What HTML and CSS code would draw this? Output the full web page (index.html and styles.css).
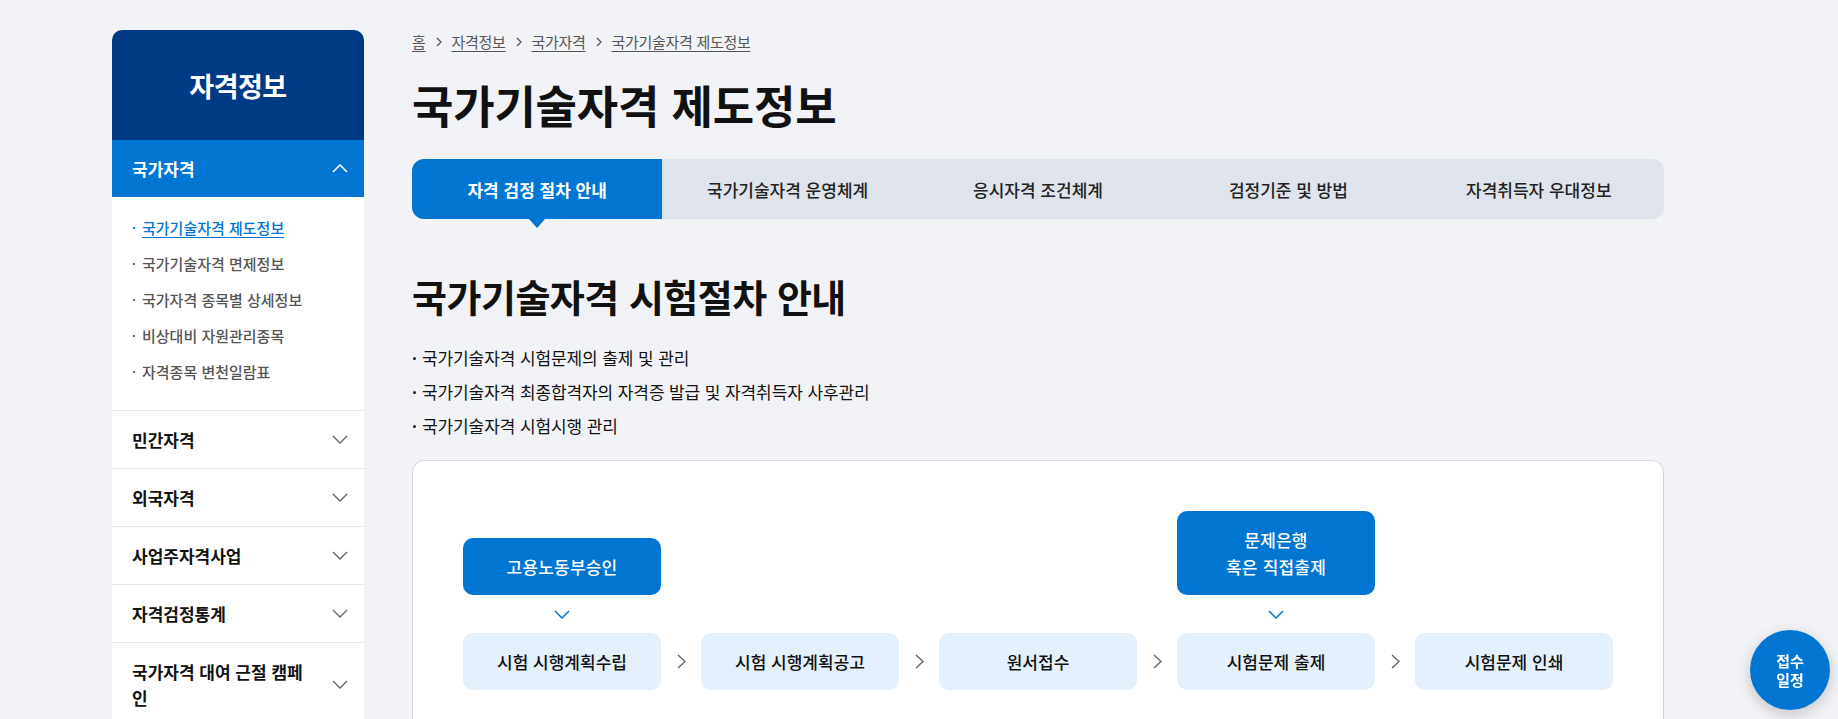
FILE: index.html
```html
<!DOCTYPE html>
<html lang="ko">
<head>
    <meta charset="UTF-8">
    <title>국가기술자격 제도정보</title>
    <link rel="stylesheet" href="styles.css">
</head>
<body>
    <div class="wrap">
        <aside class="lnb">
            <h2 class="lnb-title">자격정보</h2>
            <div class="lnb-group open">
                <a href="#" class="lnb-head">
                    <span>국가자격</span>
                    <svg width="16" height="9" viewBox="0 0 16 9"><path d="M1 8L8 1L15 8" fill="none" stroke="#fff" stroke-width="1.6"/></svg>
                </a>
                <ul class="lnb-sub">
                    <li class="on"><a href="#">국가기술자격 제도정보</a></li>
                    <li><a href="#">국가기술자격 면제정보</a></li>
                    <li><a href="#">국가자격 종목별 상세정보</a></li>
                    <li><a href="#">비상대비 자원관리종목</a></li>
                    <li><a href="#">자격종목 변천일람표</a></li>
                </ul>
            </div>
            <div class="lnb-group">
                <a href="#" class="lnb-head">
                    <span>민간자격</span>
                    <svg width="16" height="9" viewBox="0 0 16 9"><path d="M1 1L8 8L15 1" fill="none" stroke="#666" stroke-width="1.4"/></svg>
                </a>
            </div>
            <div class="lnb-group">
                <a href="#" class="lnb-head">
                    <span>외국자격</span>
                    <svg width="16" height="9" viewBox="0 0 16 9"><path d="M1 1L8 8L15 1" fill="none" stroke="#666" stroke-width="1.4"/></svg>
                </a>
            </div>
            <div class="lnb-group">
                <a href="#" class="lnb-head">
                    <span>사업주자격사업</span>
                    <svg width="16" height="9" viewBox="0 0 16 9"><path d="M1 1L8 8L15 1" fill="none" stroke="#666" stroke-width="1.4"/></svg>
                </a>
            </div>
            <div class="lnb-group">
                <a href="#" class="lnb-head">
                    <span>자격검정통계</span>
                    <svg width="16" height="9" viewBox="0 0 16 9"><path d="M1 1L8 8L15 1" fill="none" stroke="#666" stroke-width="1.4"/></svg>
                </a>
            </div>
            <div class="lnb-group">
                <a href="#" class="lnb-head">
                    <span>국가자격 대여 근절 캠페인</span>
                    <svg width="16" height="9" viewBox="0 0 16 9"><path d="M1 1L8 8L15 1" fill="none" stroke="#666" stroke-width="1.4"/></svg>
                </a>
            </div>
        </aside>

        <main class="content">
            <div class="breadcrumb">
                <a href="#">홈</a>
                <svg width="6" height="10" viewBox="0 0 6 10"><path d="M1 1L5 5L1 9" fill="none" stroke="#555" stroke-width="1.2"/></svg>
                <a href="#">자격정보</a>
                <svg width="6" height="10" viewBox="0 0 6 10"><path d="M1 1L5 5L1 9" fill="none" stroke="#555" stroke-width="1.2"/></svg>
                <a href="#">국가자격</a>
                <svg width="6" height="10" viewBox="0 0 6 10"><path d="M1 1L5 5L1 9" fill="none" stroke="#555" stroke-width="1.2"/></svg>
                <a href="#">국가기술자격 제도정보</a>
            </div>

            <h1 class="page-title">국가기술자격 제도정보</h1>

            <ul class="tabs">
                <li class="on"><a href="#">자격 검정 절차 안내</a></li>
                <li><a href="#">국가기술자격 운영체계</a></li>
                <li><a href="#">응시자격 조건체계</a></li>
                <li><a href="#">검정기준 및 방법</a></li>
                <li><a href="#">자격취득자 우대정보</a></li>
            </ul>

            <h2 class="sec-title">국가기술자격 시험절차 안내</h2>
            <ul class="dot-list">
                <li>국가기술자격 시험문제의 출제 및 관리</li>
                <li>국가기술자격 최종합격자의 자격증 발급 및 자격취득자 사후관리</li>
                <li>국가기술자격 시험시행 관리</li>
            </ul>

            <div class="flow-box">
                <div class="flow-row top">
                    <div class="flow-top col-1">고용노동부승인</div>
                    <div class="flow-top col-7">문제은행<br>혹은 직접출제</div>
                </div>
                <div class="flow-row down">
                    <svg class="col-1" width="16" height="9" viewBox="0 0 16 9"><path d="M1 1L8 8L15 1" fill="none" stroke="#0075d2" stroke-width="1.5"/></svg>
                    <svg class="col-7" width="16" height="9" viewBox="0 0 16 9"><path d="M1 1L8 8L15 1" fill="none" stroke="#0075d2" stroke-width="1.5"/></svg>
                </div>
                <div class="flow-row steps">
                    <div class="step">시험 시행계획수립</div>
                    <div class="arrow"><svg width="9" height="15" viewBox="0 0 9 15"><path d="M1 1L8 7.5L1 14" fill="none" stroke="#666" stroke-width="1.4"/></svg></div>
                    <div class="step">시험 시행계획공고</div>
                    <div class="arrow"><svg width="9" height="15" viewBox="0 0 9 15"><path d="M1 1L8 7.5L1 14" fill="none" stroke="#666" stroke-width="1.4"/></svg></div>
                    <div class="step">원서접수</div>
                    <div class="arrow"><svg width="9" height="15" viewBox="0 0 9 15"><path d="M1 1L8 7.5L1 14" fill="none" stroke="#666" stroke-width="1.4"/></svg></div>
                    <div class="step">시험문제 출제</div>
                    <div class="arrow"><svg width="9" height="15" viewBox="0 0 9 15"><path d="M1 1L8 7.5L1 14" fill="none" stroke="#666" stroke-width="1.4"/></svg></div>
                    <div class="step">시험문제 인쇄</div>
                </div>
            </div>
        </main>
    </div>

    <a href="#" class="quick-btn">접수<br>일정</a>
</body>
</html>
```

FILE: styles.css
```css
body {
    margin: 0;
    background-color: #f1f3f7;
    color: #111;
    font-family: "Noto Sans CJK KR", "Noto Sans", sans-serif;
}
a {
    color: inherit;
    text-decoration: none;
}
ul {
    list-style: none;
    margin: 0;
    padding: 0;
}
.wrap {
    display: flex;
    align-items: flex-start;
    gap: 48px;
    padding: 30px 0 0 112px;
}

/* left menu */
.lnb {
    width: 252px;
    flex: none;
    background-color: #fff;
    border-radius: 10px 10px 0 0;
}
.lnb-title {
    height: 110px;
    margin: 0;
    display: flex;
    align-items: center;
    justify-content: center;
    background-color: #003984;
    color: #fff;
    font-size: 27px;
    font-weight: 700;
    letter-spacing: -0.5px;
    border-radius: 10px 10px 0 0;
}
.lnb-group {
    border-top: 1px solid #e4e7eb;
}
.lnb-group.open {
    border-top: 0;
}
.lnb-head {
    display: flex;
    align-items: center;
    gap: 24px;
    padding: 15.5px 16px 15.5px 20px;
    font-size: 17px;
    font-weight: 700;
    line-height: 26px;
    color: #111;
}
.lnb-head span {
    flex: 1;
}
.lnb-head svg {
    flex: none;
}
.open .lnb-head {
    background-color: #0075d2;
    color: #fff;
}
.lnb-sub {
    padding: 13px 20px 20px 21px;
}
.lnb-sub li {
    position: relative;
    padding-left: 9px;
    font-size: 15px;
    font-weight: 500;
    line-height: 36px;
    color: #555;
}
.lnb-sub li::before {
    content: "";
    position: absolute;
    left: 0;
    top: 17px;
    width: 2px;
    height: 2px;
    background-color: #666;
}
.lnb-sub li.on {
    color: #0075d2;
}
.lnb-sub li.on::before {
    background-color: #0075d2;
}
.lnb-sub li.on a {
    text-decoration: underline;
    text-underline-offset: 3px;
}

/* content */
.content {
    width: 1252px;
    flex: none;
    padding-top: 2px;
}
.breadcrumb {
    display: flex;
    align-items: center;
    gap: 10px;
    font-size: 15px;
    line-height: 20px;
    letter-spacing: -0.3px;
    color: #555;
}
.breadcrumb a {
    text-decoration: underline;
    text-underline-offset: 3px;
}
.page-title {
    margin: 24px 0 25px;
    font-size: 45px;
    line-height: 58px;
    font-weight: 700;
    letter-spacing: -0.2px;
}
.tabs {
    display: grid;
    grid-template-columns: repeat(5, 1fr);
    height: 60px;
    background-color: #dfe3eb;
    border-radius: 12px;
}
.tabs li {
    position: relative;
    display: flex;
    align-items: center;
    justify-content: center;
    font-size: 17px;
    font-weight: 500;
    color: #222;
}
.tabs li.on {
    background-color: #0075d2;
    color: #fff;
    font-weight: 700;
    border-radius: 12px 0 0 12px;
}
.tabs li.on::after {
    content: "";
    position: absolute;
    left: 50%;
    top: 100%;
    margin-left: -8px;
    border-left: 8px solid transparent;
    border-right: 8px solid transparent;
    border-top: 9px solid #0075d2;
}
.sec-title {
    margin: 52px 0 20px;
    font-size: 38px;
    line-height: 50px;
    font-weight: 700;
    letter-spacing: -0.5px;
}
.dot-list li {
    position: relative;
    padding-left: 10px;
    font-size: 17px;
    line-height: 34px;
    letter-spacing: -0.1px;
}
.dot-list li::before {
    content: "";
    position: absolute;
    left: 1px;
    top: 16px;
    width: 3px;
    height: 3px;
    border-radius: 50%;
    background-color: #222;
}

/* flow chart */
.flow-box {
    margin-top: 17px;
    padding: 50px 0 60px;
    background-color: #fff;
    border: 1px solid #d5d8dc;
    border-radius: 12px;
}
.flow-row {
    display: grid;
    grid-template-columns: 198px 40px 198px 40px 198px 40px 198px 40px 198px;
    justify-content: center;
}
.flow-row.top {
    align-items: end;
}
.flow-row.down {
    height: 38px;
    align-items: center;
}
.flow-row.down svg {
    justify-self: center;
}
.col-1 {
    grid-column: 1;
}
.col-7 {
    grid-column: 7;
}
.flow-top {
    padding: 15px 10px;
    background-color: #0075d2;
    color: #fff;
    border-radius: 10px;
    text-align: center;
    font-size: 17px;
    font-weight: 500;
    line-height: 27px;
    letter-spacing: 0.2px;
}
.step {
    height: 57px;
    display: flex;
    align-items: center;
    justify-content: center;
    background-color: #e4f0fb;
    border-radius: 10px;
    font-size: 17px;
    font-weight: 500;
}
.arrow {
    display: flex;
    align-items: center;
    justify-content: center;
}

.quick-btn {
    position: fixed;
    right: 8px;
    bottom: 9px;
    width: 80px;
    height: 80px;
    display: flex;
    align-items: center;
    justify-content: center;
    text-align: center;
    border-radius: 50%;
    background-color: #0075d2;
    color: #fff;
    font-size: 15px;
    font-weight: 700;
    line-height: 19px;
    box-shadow: 0 4px 14px rgba(0, 0, 0, 0.2);
}
```
